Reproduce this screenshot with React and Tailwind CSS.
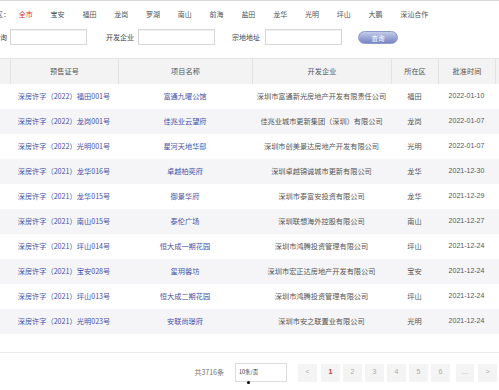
import React from "react";

const districts = ["全市","宝安","福田","龙岗","罗湖","南山","前海","盐田","龙华","光明","坪山","大鹏","深汕合作"];

const rows = [
  ["深房许字（2022）福田001号","富通九曜公馆","深圳市富通新光房地产开发有限责任公司","福田","2022-01-10"],
  ["深房许字（2022）龙岗001号","佳兆业云望府","佳兆业城市更新集团（深圳）有限公司","龙岗","2022-01-07"],
  ["深房许字（2022）光明001号","星河天地华邸","深圳市创美景达房地产开发有限公司","光明","2022-01-07"],
  ["深房许字（2021）龙华016号","卓越柏奕府","深圳卓越锦诚城市更新有限公司","龙华","2021-12-30"],
  ["深房许字（2021）龙华015号","御景华府","深圳市泰富安投资有限公司","龙华","2021-12-29"],
  ["深房许字（2021）南山015号","泰伦广场","深圳联想海外控股有限公司","南山","2021-12-27"],
  ["深房许字（2021）坪山014号","恒大成一期花园","深圳市鸿腾投资管理有限公司","坪山","2021-12-24"],
  ["深房许字（2021）宝安028号","玺玥馨坊","深圳市宏正达房地产开发有限公司","宝安","2021-12-24"],
  ["深房许字（2021）坪山013号","恒大成二期花园","深圳市鸿腾投资管理有限公司","坪山","2021-12-24"],
  ["深房许字（2021）光明023号","安联尚璟府","深圳市安之联置业有限公司","光明","2021-12-24"],
];

const font = { fontFamily: '"Noto Sans CJK SC", "Liberation Sans", sans-serif' };

export default function App() {
  return (
    <div className="relative w-[499px] h-[390px] overflow-hidden bg-white" style={font}>
      <div className="h-[1px] bg-[#d8d8d8]" />
      {/* districts */}
      <div className="flex items-center h-[26px] text-[7px] text-[#555] gap-[17.8px] whitespace-nowrap">
        <span className="ml-[-4px]">区：</span>
        {districts.map((d, i) => (
          <span key={d} className={i === 0 ? "text-[#d9343a] ml-[-9px]" : ""}>{d}</span>
        ))}
      </div>
      {/* filters */}
      <div className="flex items-center h-[18px] mt-[1px] text-[7px] text-[#444] whitespace-nowrap">
        <span className="ml-[-7px]">查询</span>
        <div className="ml-[3px] w-[77px] h-[16px] border border-[#d6d6d6] bg-white shadow-[inset_0_1px_1px_rgba(0,0,0,0.06)]" />
        <span className="ml-[19px]">开发企业</span>
        <div className="ml-[4px] w-[77px] h-[16px] border border-[#d6d6d6] bg-white shadow-[inset_0_1px_1px_rgba(0,0,0,0.06)]" />
        <span className="ml-[17px]">宗地地址</span>
        <div className="ml-[5px] w-[77px] h-[16px] border border-[#d6d6d6] bg-white shadow-[inset_0_1px_1px_rgba(0,0,0,0.06)]" />
        <button className="ml-[16px] w-[40px] h-[13px] rounded-full bg-gradient-to-b from-[#c3cce8] to-[#7886c2] text-white text-[6.5px] leading-[13px] border border-[#8e9acb]">查询</button>
      </div>
      {/* table */}
      <div className="mt-[12px] border-t border-[#e4e4e4]">
        <div className="grid grid-cols-[10px_108px_134px_139px_47px_57px_4px] h-[25px] bg-[#f3f3f3] text-[7.2px] text-[#555]">
          {["", "预售证号", "项目名称", "开发企业", "所在区", "批准时间", ""].map((h, i) => (
            <div key={i} className={`flex items-center justify-center ${i > 0 ? "border-l border-[#e2e2e2]" : ""}`}>{h}</div>
          ))}
        </div>
        {rows.map((r, idx) => (
          <div key={idx} className={`grid grid-cols-[10px_108px_134px_139px_47px_57px_4px] h-[25px] text-[7.2px] whitespace-nowrap ${idx % 2 === 1 ? "bg-[#f5f5f7]" : "bg-white"}`}>
            <div />
            <div className="flex items-center justify-center text-[#4452a8]">{r[0]}</div>
            <div className="flex items-center justify-center text-[#4452a8]">{r[1]}</div>
            <div className="flex items-center justify-center text-[#555]">{r[2]}</div>
            <div className="flex items-center justify-center text-[#555]">{r[3]}</div>
            <div className="flex items-center justify-center text-[#555] text-[7px]" style={{ fontFamily: '"Liberation Sans", sans-serif' }}>{r[4]}</div>
            <div />
          </div>
        ))}
      </div>
      {/* pagination */}
      <div className="mt-[18px] border-t border-[#ececec]">
        <div className="flex items-center justify-end pr-[2px] pt-[10px] text-[7px] whitespace-nowrap">
          <span className="text-[#777] mr-[11px]">共3716条</span>
          <div className="w-[52px] h-[19px] border border-[#dcdcdc] flex items-center px-[3px] text-[5.5px] text-[#333] mr-[11px]">10条/页</div>
          <div className="flex items-center gap-[3px] text-[#aaa]" style={{ fontFamily: '"Liberation Sans", sans-serif' }}>
            {["<", "1", "2", "3", "4", "5", "6"].map((p) => (
              <div key={p} className={`w-[19px] h-[18px] bg-[#f4f4f5] flex items-center justify-center ${p === "1" ? "text-[#c8323a] font-bold" : ""} ${p === "<" ? "mr-[1px]" : ""}`}>{p}</div>
            ))}
            <div className="ml-[3px] w-[18px] h-[18px] bg-[#f4f4f5] flex items-center justify-center">...</div>
            <div className="ml-[1px] w-[19px] h-[18px] bg-[#f4f4f5] flex items-center justify-center">&gt;</div>
          </div>
        </div>
      </div>
      <div className="absolute left-[247px] top-[381px] w-[3px] h-[3px] rounded-full bg-black" />
    </div>
  );
}
